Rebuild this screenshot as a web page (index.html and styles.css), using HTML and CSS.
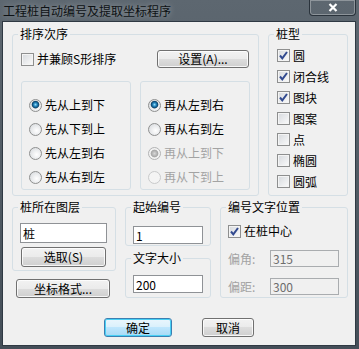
FILE: index.html
```html
<!DOCTYPE html>
<html lang="zh-CN">

<head>
    <meta charset="UTF-8">
    <title>工程桩自动编号及提取坐标程序</title>
    <link rel="stylesheet" href="styles.css">
</head>

<body>
    <div class="window">
        <div class="titlebar">
            <div class="title">工程桩自动编号及提取坐标程序</div>
            <div class="close">
                <svg width="10" height="9" viewBox="0 0 10 9">
                    <path d="M1.5 1 L8.5 8 M8.5 1 L1.5 8" stroke="#fff" stroke-width="2.2" fill="none" />
                </svg>
            </div>
        </div>

        <div class="client">
            <div class="top">
                <fieldset class="group g-order">
                    <legend>排序次序</legend>
                    <div class="row1">
                        <div class="opt-c"><span class="check"></span>并兼顾S形排序</div>
                        <button class="btn btn-set">设置(A)...</button>
                    </div>
                    <div class="subs">
                        <div class="sub">
                            <div class="opt"><span class="radio on"></span>先从上到下</div>
                            <div class="opt"><span class="radio"></span>先从下到上</div>
                            <div class="opt"><span class="radio"></span>先从左到右</div>
                            <div class="opt"><span class="radio"></span>先从右到左</div>
                        </div>
                        <div class="sub">
                            <div class="opt"><span class="radio on"></span>再从左到右</div>
                            <div class="opt"><span class="radio"></span>再从右到左</div>
                            <div class="opt off"><span class="radio on"></span>再从上到下</div>
                            <div class="opt off"><span class="radio"></span>再从下到上</div>
                        </div>
                    </div>
                </fieldset>

                <fieldset class="group g-type">
                    <legend>桩型</legend>
                    <div class="opt-c tall"><span class="check on"></span>圆</div>
                    <div class="opt-c tall"><span class="check on"></span>闭合线</div>
                    <div class="opt-c tall"><span class="check on"></span>图块</div>
                    <div class="opt-c tall"><span class="check"></span>图案</div>
                    <div class="opt-c tall"><span class="check"></span>点</div>
                    <div class="opt-c tall"><span class="check"></span>椭圆</div>
                    <div class="opt-c tall"><span class="check"></span>圆弧</div>
                </fieldset>
            </div>

            <div class="bottom">
                <div class="col-a">
                    <fieldset class="group g-layer">
                        <legend>桩所在图层</legend>
                        <input class="box box-layer" type="text" value="桩">
                        <button class="btn btn-pick">选取(S)</button>
                    </fieldset>
                    <button class="btn btn-format">坐标格式...</button>
                </div>

                <div class="col-b">
                    <fieldset class="group g-start">
                        <legend>起始编号</legend>
                        <input class="box box-num" type="text" value="1">
                    </fieldset>
                    <fieldset class="group g-size">
                        <legend>文字大小</legend>
                        <input class="box box-num" type="text" value="200">
                    </fieldset>
                </div>

                <div class="col-c">
                    <fieldset class="group g-pos">
                        <legend>编号文字位置</legend>
                        <div class="opt-c center"><span class="check on"></span>在桩中心</div>
                        <div class="field">
                            <span class="field-label">偏角:</span>
                            <input class="box box-off" type="text" value="315" disabled>
                        </div>
                        <div class="field">
                            <span class="field-label">偏距:</span>
                            <input class="box box-off" type="text" value="300" disabled>
                        </div>
                    </fieldset>
                </div>
            </div>

            <div class="actions">
                <button class="btn btn-ok">确定</button>
                <button class="btn btn-cancel">取消</button>
            </div>
        </div>
    </div>
</body>

</html>
```

FILE: styles.css
```css
* {
    margin: 0;
    padding: 0;
    box-sizing: border-box;
    font-family: "Noto Sans CJK SC", "Noto Sans", sans-serif;
}

body {
    background: #fff;
    font-size: 12px;
    color: #000;
}

.window {
    width: 359px;
    height: 349px;
    display: flex;
    flex-direction: column;
    background: linear-gradient(#5d6770, #4f5962 60%, #444e58);
}

/* title bar */
.titlebar {
    height: 22px;
    display: flex;
    align-items: flex-start;
    padding-left: 3px;
}

.title {
    font-size: 12px;
    line-height: 22px;
    color: #0d1114;
    text-shadow: 0 0 6px rgba(255, 255, 255, 0.45);
}

.close {
    margin-left: auto;
    margin-right: 3px;
    width: 47px;
    height: 16px;
    border: 1px solid #2a333c;
    border-top: none;
    border-radius: 0 0 4px 4px;
    box-shadow: inset 0 0 0 1px rgba(255, 255, 255, 0.3);
    display: flex;
    align-items: center;
    justify-content: center;
}

/* client area */
.client {
    flex: 1;
    margin: 0 4px 4px 3px;
    padding: 5px 0 0 9px;
    background: #f0f0f0;
    box-shadow: 0 0 0 1px #2f3943;
}

.group {
    border: 1px solid #d5dfe5;
    border-radius: 3px;
    min-width: 0;
}

legend {
    padding: 0 2px;
    line-height: 14px;
    font-size: 12px;
}

.top {
    display: flex;
    gap: 9px;
}

.g-order {
    width: 247px;
    padding: 9px 8px 5px 8px;
}

.g-order legend,
.g-type legend {
    margin-left: -3px;
}

.row1 {
    display: flex;
    justify-content: space-between;
    align-items: center;
    height: 18px;
}

.subs {
    display: flex;
    gap: 9px;
    margin-top: 13px;
}

.sub {
    width: 110px;
    height: 109px;
    border: 1px solid #d5dfe5;
    border-radius: 3px;
    padding: 11px 0 0 7px;
}

.opt {
    display: flex;
    align-items: center;
    gap: 3px;
    height: 24px;
    line-height: 14px;
}

.opt.off {
    color: #a3a3a3;
}

.g-type {
    width: 80px;
    padding: 4px 0 3px 8px;
}

.opt-c {
    display: flex;
    align-items: center;
    gap: 3px;
    line-height: 14px;
}

.opt-c.tall {
    height: 21px;
}

.opt-c.center {
    height: 16px;
}

/* checkbox and radio */
.check {
    width: 13px;
    height: 13px;
    flex: none;
    border: 1px solid #8e8f8f;
    background: linear-gradient(135deg, #d6d9dd, #fbfbfb);
    box-shadow: inset 0 0 0 1px #f4f4f4;
}

.check.on {
    background: url("data:image/svg+xml;utf8,<svg xmlns='http://www.w3.org/2000/svg' width='11' height='11'><path d='M2 5.5 L4.3 8.3 L9 2' stroke='%23324a8f' stroke-width='2' fill='none'/></svg>") no-repeat center, linear-gradient(135deg, #d6d9dd, #fbfbfb);
}

.radio {
    width: 13px;
    height: 13px;
    flex: none;
    border: 1px solid #8e8f8f;
    border-radius: 50%;
    background: radial-gradient(circle at 60% 60%, #ffffff, #d3d6da);
}

.radio.on {
    background: radial-gradient(circle at 50% 42%, #9be3fb 0, #2a8cc4 1.6px, #0b4a76 3.2px, #7b8a95 3.8px, transparent 4.2px), radial-gradient(circle at 60% 60%, #ffffff, #d3d6da);
}

.off .radio {
    border-color: #c9cacb;
    background: #f4f4f4;
}

.off .radio.on {
    border-color: #b2b3b4;
    background: radial-gradient(circle, #d8d8d8 0, #a9a9a9 3.2px, #c0c0c0 3.8px, transparent 4.2px), #f2f2f2;
}

/* buttons */
.btn {
    height: 18px;
    font-size: 12px;
    line-height: 14px;
    color: #000;
    border: 1px solid #707070;
    border-radius: 3px;
    background: linear-gradient(#f2f2f2 0%, #ebebeb 50%, #dddddd 50%, #cfcfcf 100%);
    box-shadow: inset 0 0 0 1px rgba(255, 255, 255, 0.8);
    cursor: pointer;
}

.btn-set {
    width: 92px;
    margin-right: 1px;
}

.btn-pick {
    display: block;
    width: 85px;
    height: 20px;
    margin: 4px 0 0 1px;
}

.btn-format {
    display: block;
    width: 94px;
    height: 19px;
    margin: 8px 0 0 4px;
}

/* bottom area */
.bottom {
    display: flex;
    align-items: flex-start;
    gap: 9px;
    margin-top: 4px;
}

.col-a {
    width: 104px;
}

.col-b {
    width: 86px;
}

.col-c {
    width: 128px;
}

.g-layer,
.g-start,
.g-size,
.g-pos {
    width: 100%;
}

.g-layer legend,
.g-start legend,
.g-size legend,
.g-pos legend {
    margin-left: -2px;
}

.g-layer {
    padding: 9px 0 3px 7px;
}

.g-start {
    padding: 12px 0 1px 7px;
}

.g-size {
    margin-top: 5px;
    padding: 10px 0 4px 7px;
}

.g-pos {
    padding: 9px 0 2px 7px;
}

.box {
    display: block;
    height: 18px;
    padding: 0 2px;
    font-size: 12px;
    line-height: 14px;
    color: #000;
    background: #fff;
    border: 1px solid #8f9296;
    outline: none;
}

.box-layer {
    width: 87px;
    height: 20px;
}

.box-num {
    width: 70px;
}

.field {
    display: flex;
    align-items: center;
    height: 17px;
    margin-top: 11px;
}

.field-label {
    width: 42px;
    color: #a3a3a3;
}

.box-off {
    width: 69px;
    height: 17px;
    color: #6d6d6d;
    background: #f0f0f0;
    border-color: #a9acaf;
}

/* dialog buttons */
.actions {
    display: flex;
    justify-content: center;
    gap: 30px;
    margin-top: 20px;
    margin-left: -9px;
}

.btn-ok,
.btn-cancel {
    height: 19px;
}

.btn-ok {
    width: 68px;
    border-color: #3c7fb1;
    background: linear-gradient(#eaf6fd 0%, #d9f0fc 50%, #bee6fd 50%, #a7d9f5 100%);
    box-shadow: inset 0 0 0 1px #48d0f5;
}

.btn-cancel {
    width: 52px;
}
```
